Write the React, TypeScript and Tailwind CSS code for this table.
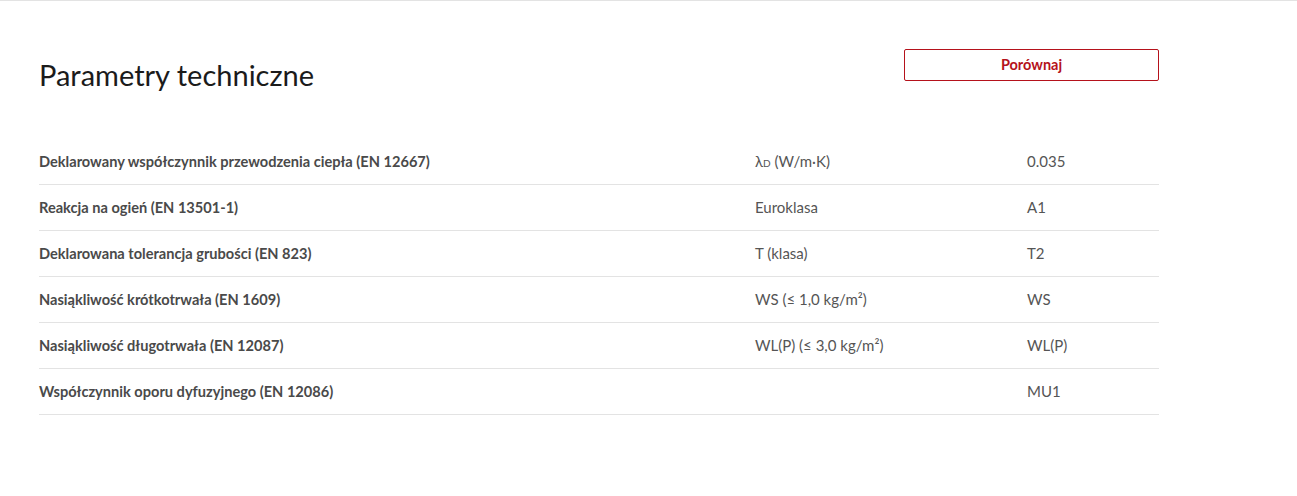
import type React from "react"

type Row = { label: string; unit: React.ReactNode; value: string }

const rows: Row[] = [
  {
    label: "Deklarowany współczynnik przewodzenia ciepła (EN 12667)",
    unit: (
      <>
        λ<span className="text-[10px]">D</span> (W/m·K)
      </>
    ),
    value: "0.035",
  },
  { label: "Reakcja na ogień (EN 13501-1)", unit: "Euroklasa", value: "A1" },
  { label: "Deklarowana tolerancja grubości (EN 823)", unit: "T (klasa)", value: "T2" },
  { label: "Nasiąkliwość krótkotrwała (EN 1609)", unit: "WS (≤ 1,0 kg/m²)", value: "WS" },
  { label: "Nasiąkliwość długotrwała (EN 12087)", unit: "WL(P) (≤ 3,0 kg/m²)", value: "WL(P)" },
  { label: "Współczynnik oporu dyfuzyjnego (EN 12086)", unit: "", value: "MU1" },
]

const App: React.FC = () => {
  return (
    <div className="min-h-[496px] bg-white border-t border-[#e3e3e3] font-['Lato',sans-serif]">
      <div className="w-[1120px] ml-[39px]">
        {/* Header */}
        <div className="flex items-start justify-between pt-[48px]">
          <h2 className="mt-[8px] text-[29px] leading-[36px] text-[#1b1b1b]">Parametry techniczne</h2>
          <button className="w-[255px] h-[32px] border border-[#b5121b] rounded-[2px] text-[#b5121b] text-[14.5px] font-bold">
            Porównaj
          </button>
        </div>

        {/* Table */}
        <div className="mt-[46px]">
          {rows.map((r) => (
            <div
              key={r.label}
              className="grid grid-cols-[716px_272px_132px] h-[46px] items-center border-b border-[#e3e3e3] text-[15px]"
            >
              <div className="font-bold text-[14.6px] text-[#4a4a4a]">{r.label}</div>
              <div className="text-[#555555]">{r.unit}</div>
              <div className="text-[#555555]">{r.value}</div>
            </div>
          ))}
        </div>
      </div>
    </div>
  )
}

export default App
